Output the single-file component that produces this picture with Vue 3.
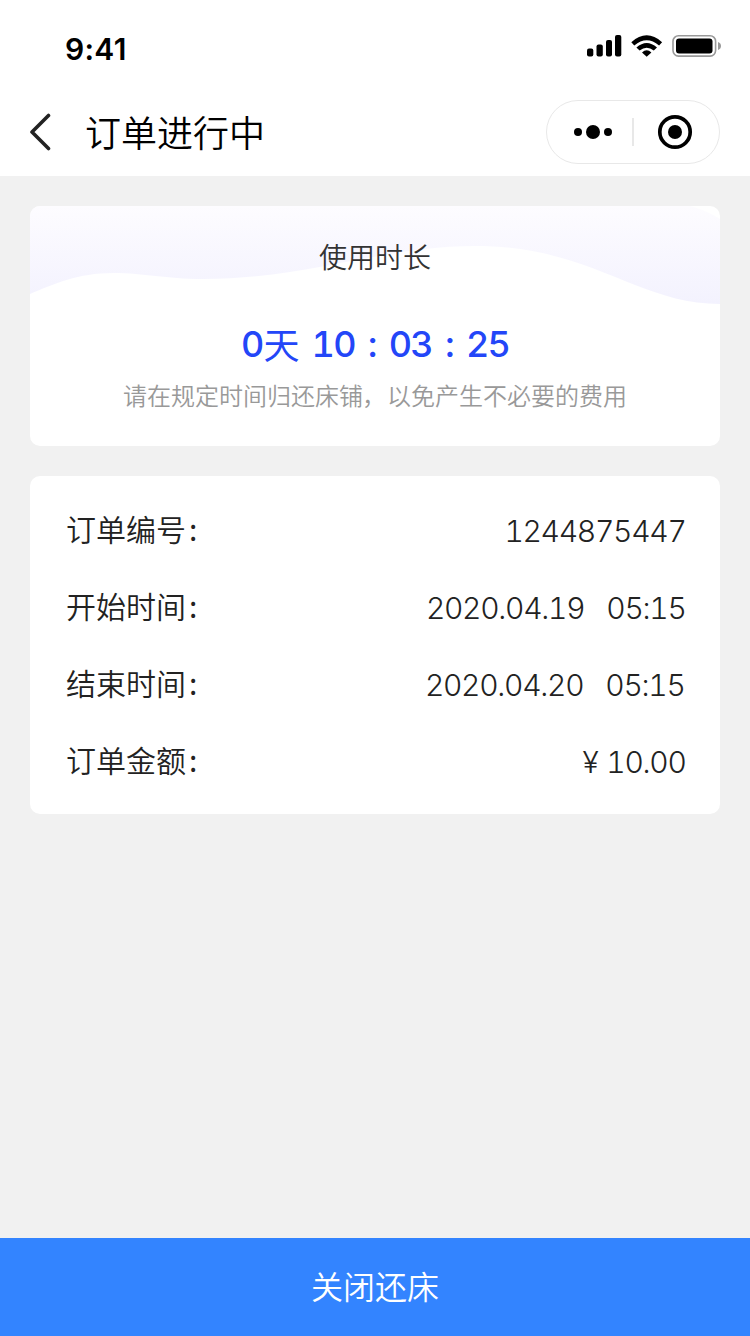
<script setup>
const orderRows = [
  { label: '订单编号', parts: ['1244875447'] },
  { label: '开始时间', parts: ['2020.04.19', '05:15'] },
  { label: '结束时间', parts: ['2020.04.20', '05:15'], nudge: true },
  { label: '订单金额', parts: ['¥', '10.00'], money: true },
]
</script>

<template>
  <div class="page">
    <header class="header">
      <div class="status">
        <span class="clock">9:41</span>
        <svg class="status-icons" width="136" height="24" viewBox="0 0 136 24">
          <rect x="1" y="14.5" width="6.3" height="8" rx="2" />
          <rect x="10.5" y="10.5" width="6.3" height="12" rx="2" />
          <rect x="20" y="6" width="6" height="16.5" rx="2" />
          <rect x="29" y="1" width="6.3" height="21.5" rx="2" />
          <path d="M45.3 8.2Q60.7 -5.5 76.1 8.2L73.1 11.4Q60.7 .9 48.3 11.4Z" />
          <path d="M50.4 13.6Q60.7 4.4 71 13.6L67.8 16.6Q60.7 10.8 53.6 16.6Z" />
          <path d="M56 18.5Q60.7 14.2 65.4 18.5L60.7 22.8Z" />
          <rect x="87" y="1.7" width="42.6" height="20.4" rx="5.5" fill="none" stroke="#999" stroke-width="1.6" />
          <rect x="90" y="4.5" width="36.5" height="15" rx="3" />
          <path d="M132 8V16Q135 14.8 135 12Q135 9.2 132 8Z" fill="#999" />
        </svg>
      </div>
      <div class="nav">
        <svg class="back" width="24" height="38" viewBox="0 0 24 38">
          <path d="M20.5 2.5L4 19L20.5 35.5" fill="none" stroke="#222" stroke-width="3.6" stroke-linecap="round" stroke-linejoin="round" />
        </svg>
        <h1 class="title">订单进行中</h1>
        <svg class="capsule" width="174" height="64" viewBox="0 0 174 64">
          <rect x=".5" y=".5" width="173" height="63" rx="31.5" fill="#fff" stroke="#e8e8e8" />
          <circle cx="32" cy="32" r="4" />
          <circle cx="47" cy="32" r="7" />
          <circle cx="62" cy="32" r="4" />
          <rect x="86" y="18" width="2" height="28" fill="#e8e8e8" />
          <circle cx="129" cy="32" r="15.2" fill="none" stroke="#000" stroke-width="3.7" />
          <circle cx="129" cy="32" r="7" />
        </svg>
      </div>
    </header>

    <main class="content">
      <section class="card usage">
        <svg class="wave" width="690" height="100" viewBox="0 0 690 100">
          <defs>
            <linearGradient id="waveFill" x1="0" y1="0" x2="0" y2="1">
              <stop offset="0" stop-color="#fdfcff" />
              <stop offset="1" stop-color="#f3f2fe" />
            </linearGradient>
          </defs>
          <path d="M0 0H660Q676 4 690 13V98C607 98 562 40 445 40C350 40 280 73 173 73C134 73 116 67 83 67C48 67 24 78 0 88Z" fill="url(#waveFill)" />
        </svg>
        <h2 class="usage-title">使用时长</h2>
        <div class="timer">
          <span>0</span><span class="day">天</span>
          <span class="hours">10</span><span class="sep">:</span>
          <span>03</span><span class="sep">:</span>
          <span>25</span>
        </div>
        <p class="hint">请在规定时间归还床铺<span class="comma">，</span>以免产生不必要的费用</p>
      </section>

      <section class="card order">
        <div v-for="row in orderRows" :key="row.label" class="row">
          <span class="label">{{ row.label }}<span class="colon">:</span></span>
          <span class="value" :class="{ money: row.money, nudge: row.nudge }">
            <span v-for="part in row.parts" :key="part">{{ part }}</span>
          </span>
        </div>
      </section>
    </main>

    <button class="action">关闭还床</button>
  </div>
</template>

<style>
body {
  margin: 0;
}
</style>

<style scoped>
.page {
  display: flex;
  flex-direction: column;
  width: 750px;
  height: 1336px;
  overflow: hidden;
  background: #f1f1f1;
  font-family: "Noto Sans CJK SC", sans-serif;
  font-weight: 350;
}
.header {
  height: 176px;
  background: #fff;
}
.status {
  display: flex;
  justify-content: space-between;
  height: 88px;
  padding: 0 28px 0 65px;
}
.clock {
  margin-top: 30px;
  font: 600 30px/38px Inter, sans-serif;
  letter-spacing: 0.3px;
}
.status-icons {
  margin-top: 34px;
}
.nav {
  display: flex;
  align-items: center;
  height: 88px;
  padding: 0 30px 0 28px;
}
.title {
  margin: 0 auto 3px 33px;
  font-size: 36px;
  line-height: 52px;
  font-weight: 350;
  color: #000;
}
.content {
  display: flex;
  flex: 1;
  flex-direction: column;
  gap: 30px;
  padding: 30px;
}
.card {
  border-radius: 10px;
  background: #fff;
  overflow: hidden;
}
.usage {
  display: grid;
  grid-template-rows: 104px 68px 68px;
  justify-items: center;
  height: 240px;
}
.wave {
  grid-area: 1 / 1;
}
.usage-title {
  grid-area: 1 / 1;
  z-index: 1;
  margin: 30px 0 0;
  font-size: 28px;
  line-height: 40px;
  font-weight: 350;
  color: #333;
}
.timer {
  display: flex;
  align-items: center;
  height: 68px;
  color: #2346f8;
  font: 450 36px/50px Inter, "Noto Sans CJK SC", sans-serif;
  font-feature-settings: "tnum";
  letter-spacing: -1.75px;
}
.day {
  margin: 0 0 3px 1px;
  font-family: "Noto Sans CJK SC", sans-serif;
  font-weight: 400;
  letter-spacing: 0;
}
.hours {
  margin-left: 12px;
}
.sep {
  width: 34px;
  text-align: center;
}
.hint {
  margin: -1px 0 0;
  font-size: 24px;
  line-height: 36px;
  color: #999;
}
.comma {
  margin: 0 1px 0 -1px;
}
.order {
  height: 306px;
  padding: 16px 34px 16px 36px;
}
.row {
  display: flex;
  align-items: center;
  justify-content: space-between;
  height: 77px;
  color: #222;
}
.label {
  margin-bottom: 5px;
  font-size: 30px;
  line-height: 44px;
}
.colon {
  margin-left: 3px;
  font-weight: 400;
}
.value {
  display: flex;
  gap: 22px;
  font: 300 30px/44px Inter, sans-serif;
  font-feature-settings: "tnum";
  letter-spacing: -1.3px;
}
.value span:last-child {
  margin-right: 0.5px;
}
.money {
  gap: 9px;
}
.nudge {
  margin-right: 1px;
}
.action {
  height: 98px;
  padding: 0 0 4px;
  border: 0;
  background: #3384ff;
  color: #fff;
  font: 350 32px/48px "Noto Sans CJK SC", sans-serif;
}
</style>
